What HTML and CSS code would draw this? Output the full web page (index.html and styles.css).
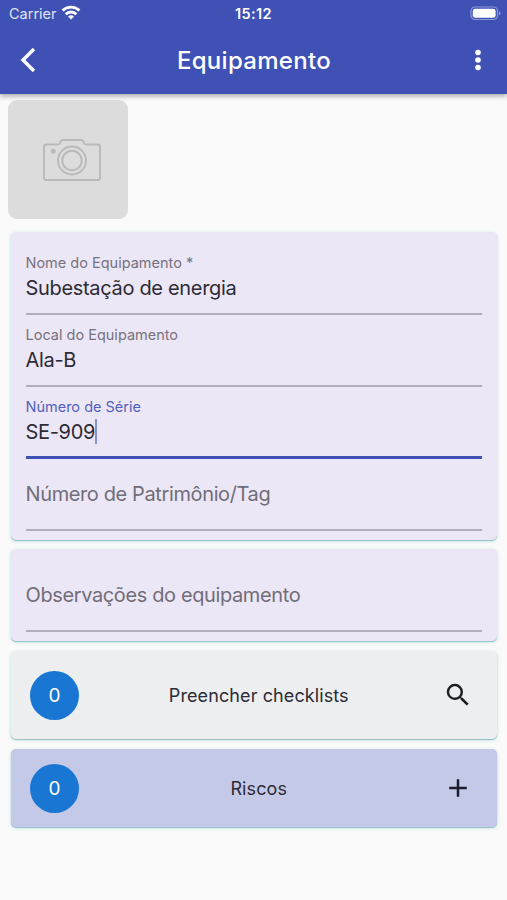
FILE: index.html
```html
<!DOCTYPE html>
<html lang="pt-BR">
<head>
    <meta charset="UTF-8">
    <meta name="viewport" content="width=device-width, initial-scale=1.0">
    <title>Equipamento</title>
    <link rel="stylesheet" href="styles.css">
</head>
<body>
    <header>
        <div class="status-bar">
            <div class="carrier">
                <span>Carrier</span>
                <svg class="wifi" width="20" height="15" viewBox="0 0 20 15" fill="none" stroke="#fff" stroke-width="2.8">
                    <path d="M1.600 5.600a12 12 0 0 1 16.800 0"/>
                    <path d="M4.700 9.200a7.500 7.500 0 0 1 10.600 0"/>
                    <path d="M10 14.600l-3-3a4.200 4.200 0 0 1 6 0z" fill="#fff" stroke="none"/>
                </svg>
            </div>
            <span class="clock">15:12</span>
            <svg class="battery" width="31" height="15" viewBox="0 0 31 15">
                <rect x="1" y="1" width="26.500" height="12.500" rx="4" fill="none" stroke="#8e98d6" stroke-width="1.2"/>
                <rect x="2.800" y="2.800" width="22.800" height="9" rx="2.400" fill="#fff"/>
                <path d="M29 5.200v4.200q1.500-.6 1.500-2.100T29 5.200z" fill="#8e98d6"/>
            </svg>
        </div>
        <div class="app-bar">
            <svg class="back" width="16" height="26" viewBox="0 0 16 26" fill="none" stroke="#fff" stroke-width="3.4">
                <path d="M14 2L3 13l11 11"/>
            </svg>
            <h1>Equipamento</h1>
            <svg class="more" width="8" height="22" viewBox="0 0 8 22" fill="#fff">
                <circle cx="4" cy="3.500" r="2.800"/>
                <circle cx="4" cy="11" r="2.800"/>
                <circle cx="4" cy="18.500" r="2.800"/>
            </svg>
        </div>
    </header>
    <main>
        <div class="photo">
            <svg width="58" height="44" viewBox="0 0 58 44" fill="none" stroke="#b9b9b9" stroke-width="1.9">
                <path d="M3 6.500h12.500c2 0 1.300-4.500 4.500-4.500h18c3.200 0 2.500 4.500 4.500 4.500H55a2 2 0 0 1 2 2V40a2 2 0 0 1-2 2H3a2 2 0 0 1-2-2V8.500a2 2 0 0 1 2-2z"/>
                <circle cx="29" cy="22.500" r="14"/>
                <circle cx="29" cy="22.500" r="9.700"/>
                <circle cx="10.200" cy="13.300" r="2.500" fill="#b9b9b9" stroke="none"/>
            </svg>
        </div>

        <section class="card">
            <div class="field">
                <label>Nome do Equipamento *</label>
                <div class="value"><span>Subestação de energia</span></div>
            </div>
            <div class="field">
                <label>Local do Equipamento</label>
                <div class="value"><span>Ala-B</span></div>
            </div>
            <div class="field active">
                <label>Número de Série</label>
                <div class="value"><span>SE-909</span><i class="caret"></i></div>
            </div>
            <div class="field empty">
                <span class="hint">Número de Patrimônio/Tag</span>
            </div>
        </section>

        <section class="card">
            <div class="field empty">
                <span class="hint">Observações do equipamento</span>
            </div>
        </section>

        <section class="card row checklists">
            <span class="count">0</span>
            <span class="row-title">Preencher checklists</span>
            <svg width="30" height="30" viewBox="0 0 24 24" fill="#1c1d1f">
                <path d="M15.500 14h-.79l-.28-.27A6.470 6.470 0 0 0 16 9.500 6.500 6.500 0 1 0 9.500 16c1.610 0 3.090-.59 4.230-1.570l.27.28v.79l5 4.990L20.490 19l-4.990-5zm-6 0C7.010 14 5 11.990 5 9.500S7.010 5 9.500 5 14 7.010 14 9.500 11.990 14 9.500 14z"/>
            </svg>
        </section>

        <section class="card row risks">
            <span class="count">0</span>
            <span class="row-title">Riscos</span>
            <svg width="30" height="30" viewBox="0 0 24 24" fill="#1c1d2c">
                <path d="M19 13h-6v6h-2v-6H5v-2h6V5h2v6h6v2z"/>
            </svg>
        </section>
    </main>
</body>
</html>
```
FILE: styles.css
```css
body {
    font-family: Inter, 'Liberation Sans', sans-serif;
    margin: 0;
    min-height: 900px;
    background: #fafafa;
    color: #2d2b35;
}
header {
    height: 94px;
    background: #3f51b5;
    color: white;
    box-shadow: 0 2px 5px rgba(0, 0, 0, 0.35);
}
.status-bar {
    display: grid;
    grid-template-columns: 1fr auto 1fr;
    align-items: center;
    height: 27px;
    padding: 0 6px 0 9px;
}
.carrier {
    display: flex;
    align-items: center;
    gap: 5px;
    font-size: 14.5px;
    color: #dfe3f8;
}
.wifi {
    margin: -2px 0 0 -1px;
}
.clock {
    margin-left: -3px;
    font-size: 14.5px;
    font-weight: 600;
    letter-spacing: 0.4px;
}
.battery {
    justify-self: end;
}
.app-bar {
    display: flex;
    align-items: center;
    justify-content: space-between;
    height: 66px;
    padding: 0 25px 0 20px;
}
.app-bar .back {
    margin-right: -2px;
}
h1 {
    margin: 0;
    font-size: 24px;
    font-weight: 500;
    letter-spacing: 0.3px;
}
main {
    padding: 6px 10px 0 10.5px;
}
.photo {
    display: flex;
    align-items: center;
    justify-content: center;
    width: 120px;
    height: 119px;
    margin: 0 0 13px -2.5px;
    padding-left: 7px;
    box-sizing: border-box;
    border-radius: 9px;
    background: #dcdcdc;
}
.card {
    margin-bottom: 9px;
    padding: 10.5px 15px 9.5px;
    border-radius: 5px;
    background: #ece7f6;
    box-shadow: 0 1px 1px #8fc0c6, 0 1px 4px rgba(0, 150, 136, 0.2);
}
.field {
    height: 72px;
    box-sizing: border-box;
    padding-top: 11px;
    border-bottom: 2px solid #b3adbf;
}
label {
    display: block;
    font-size: 14.5px;
    line-height: 18px;
    color: #77727f;
}
.value {
    display: flex;
    align-items: center;
    height: 32px;
    font-size: 20px;
    letter-spacing: -0.32px;
}
.active {
    border-bottom: 3px solid #3f51b5;
}
.active label {
    color: #5260bd;
}
.caret {
    width: 2px;
    height: 25px;
    background: #8791d1;
}
.empty {
    display: flex;
    align-items: center;
    padding: 0;
}
.hint {
    font-size: 20px;
    letter-spacing: -0.38px;
    color: #716d78;
}
.row {
    display: grid;
    grid-template-columns: 49px 1fr 49px;
    align-items: center;
    padding: 0 14.5px 0 19.5px;
}
.row svg {
    justify-self: center;
}
.row-title {
    padding-left: 5px;
    font-size: 18px;
    letter-spacing: 0.1px;
    text-align: center;
}
.count {
    width: 49px;
    height: 49px;
    border-radius: 50%;
    background: #1976d2;
    color: white;
    font-size: 19px;
    line-height: 49px;
    text-align: center;
}
.checklists {
    height: 88px;
    margin: 10px 0;
    background: #eceeef;
}
.risks {
    height: 78px;
    background: #c5c9e8;
}
```
